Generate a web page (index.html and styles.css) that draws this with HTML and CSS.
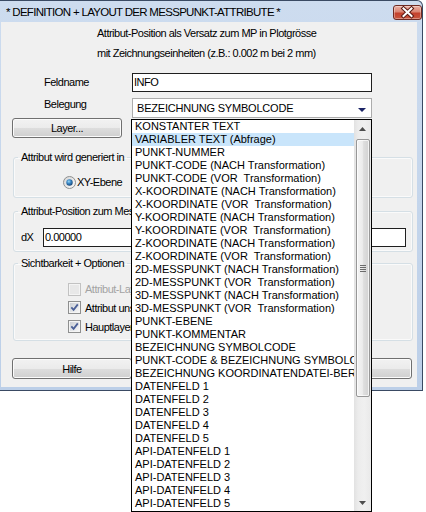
FILE: index.html
```html
<!DOCTYPE html>
<html lang="de">
<head>
<meta charset="utf-8">
<title>Definition + Layout der Messpunkt-Attribute</title>
<link rel="stylesheet" href="styles.css">
</head>
<body>
<div class="window">
  <div class="titlebar">
    <span class="title">* DEFINITION + LAYOUT DER MESSPUNKT-ATTRIBUTE *</span>
    <span class="close">
      <svg width="29" height="15" viewBox="0 0 29 15">
        <path d="M10.5 3.5 L18.5 11 M18.5 3.5 L10.5 11" stroke="#5a1a14" stroke-width="4" stroke-linecap="square"/>
        <path d="M10.5 3.5 L18.5 11 M18.5 3.5 L10.5 11" stroke="#ffffff" stroke-width="2" stroke-linecap="square"/>
      </svg>
    </span>
  </div>
  <div class="client">
    <div class="intro">
      <p>Attribut-Position als Versatz zum MP in Plotgrösse</p>
      <p>mit Zeichnungseinheiten (z.B.: 0.002 m bei 2 mm)</p>
    </div>
    <div class="row row-name">
      <span class="lbl">Feldname</span>
      <div class="edit edit-name">INFO</div>
    </div>
    <div class="row row-combo">
      <span class="lbl">Belegung</span>
      <div class="combo">
        <span class="combo-text">BEZEICHNUNG SYMBOLCODE</span>
        <svg class="combo-arrow" width="8" height="4" viewBox="0 0 8 4"><path d="M0 0 H8 L4 4 Z" fill="#1b2466"/></svg>
      </div>
    </div>
    <div class="row row-layer">
      <button class="btn btn-layer">Layer...</button>
    </div>

    <fieldset class="group g1">
      <legend>Attribut wird generiert in</legend>
      <div class="g1-in">
        <div class="radio-row">
          <svg class="radio" width="13" height="13" viewBox="0 0 13 13">
            <defs>
              <radialGradient id="dot" cx="0.4" cy="0.35" r="0.7">
                <stop offset="0" stop-color="#9ad8f6"/>
                <stop offset="0.45" stop-color="#3a86c4"/>
                <stop offset="1" stop-color="#153f6e"/>
              </radialGradient>
              <linearGradient id="ring" x1="0" y1="0" x2="1" y2="1">
                <stop offset="0" stop-color="#d4d4d4"/>
                <stop offset="1" stop-color="#fbfbfb"/>
              </linearGradient>
            </defs>
            <circle cx="6.5" cy="6.5" r="6" fill="url(#ring)" stroke="#8e8f8f"/>
            <circle cx="6.5" cy="6.5" r="3.2" fill="url(#dot)"/>
          </svg>
          <span class="radio-text">XY-Ebene</span>
        </div>
      </div>
    </fieldset>

    <fieldset class="group g2">
      <legend>Attribut-Position zum Messpunkt</legend>
      <div class="g2-in">
        <span class="dlbl">dX</span>
        <div class="edit edit-dx">0.00000</div>
      </div>
    </fieldset>

    <fieldset class="group g3">
      <legend>Sichtbarkeit + Optionen</legend>
      <div class="g3-in">
        <div class="chk-row r1 disabled">
          <svg class="chk" width="13" height="13" viewBox="0 0 13 13"><rect x="0.5" y="0.5" width="12" height="12" fill="#f4f4f4" stroke="#c2c2c2"/><rect x="2" y="2" width="9" height="9" fill="#e8e8e8"/></svg>
          <span>Attribut-Layer</span>
        </div>
        <div class="chk-row r2">
          <svg class="chk" width="13" height="13" viewBox="0 0 13 13"><defs><linearGradient id="cb" x1="0" y1="0" x2="1" y2="1"><stop offset="0" stop-color="#cbcfd5"/><stop offset="1" stop-color="#f6f6f6"/></linearGradient></defs><rect x="0.5" y="0.5" width="12" height="12" fill="#f4f4f4" stroke="#8e8f8f"/><rect x="2" y="2" width="9" height="9" fill="url(#cb)"/><path d="M3.3 6.3 L5.6 8.8 L9.8 3.4" stroke="#4a5f97" stroke-width="1.8" fill="none"/></svg>
          <span>Attribut unsichtbar</span>
        </div>
        <div class="chk-row r3">
          <svg class="chk" width="13" height="13" viewBox="0 0 13 13"><rect x="0.5" y="0.5" width="12" height="12" fill="#f4f4f4" stroke="#8e8f8f"/><rect x="2" y="2" width="9" height="9" fill="url(#cb)"/><path d="M3.3 6.3 L5.6 8.8 L9.8 3.4" stroke="#4a5f97" stroke-width="1.8" fill="none"/></svg>
          <span>Hauptlayer verwenden</span>
        </div>
      </div>
    </fieldset>

    <div class="buttons">
      <button class="btn btn-foot">Hilfe</button>
      <button class="btn btn-foot">Abbrechen</button>
      <button class="btn btn-foot">OK</button>
    </div>
  </div>
</div>

<div class="droplist">
  <ul class="items">
    <li>KONSTANTER TEXT</li>
    <li class="sel">VARIABLER TEXT (Abfrage)</li>
    <li>PUNKT-NUMMER</li>
    <li>PUNKT-CODE (NACH Transformation)</li>
    <li>PUNKT-CODE (VOR  Transformation)</li>
    <li>X-KOORDINATE (NACH Transformation)</li>
    <li>X-KOORDINATE (VOR  Transformation)</li>
    <li>Y-KOORDINATE (NACH Transformation)</li>
    <li>Y-KOORDINATE (VOR  Transformation)</li>
    <li>Z-KOORDINATE (NACH Transformation)</li>
    <li>Z-KOORDINATE (VOR  Transformation)</li>
    <li>2D-MESSPUNKT (NACH Transformation)</li>
    <li>2D-MESSPUNKT (VOR  Transformation)</li>
    <li>3D-MESSPUNKT (NACH Transformation)</li>
    <li>3D-MESSPUNKT (VOR  Transformation)</li>
    <li>PUNKT-EBENE</li>
    <li>PUNKT-KOMMENTAR</li>
    <li>BEZEICHNUNG SYMBOLCODE</li>
    <li>PUNKT-CODE &amp; BEZEICHNUNG SYMBOLCODE</li>
    <li>BEZEICHNUNG KOORDINATENDATEI-BEREICH</li>
    <li>DATENFELD 1</li>
    <li>DATENFELD 2</li>
    <li>DATENFELD 3</li>
    <li>DATENFELD 4</li>
    <li>DATENFELD 5</li>
    <li>API-DATENFELD 1</li>
    <li>API-DATENFELD 2</li>
    <li>API-DATENFELD 3</li>
    <li>API-DATENFELD 4</li>
    <li>API-DATENFELD 5</li>
  </ul>
  <div class="vscroll">
    <div class="sb-btn">
      <svg width="7" height="4" viewBox="0 0 7 4"><path d="M3.5 0 L7 4 H0 Z" fill="#4d4d4d"/></svg>
    </div>
    <div class="thumb">
      <svg width="6" height="7" viewBox="0 0 6 7"><path d="M0 0.5 H6 M0 2.5 H6 M0 4.5 H6 M0 6.5 H6" stroke="#6b6b6b" stroke-width="1"/></svg>
    </div>
    <div class="sb-track"></div>
    <div class="sb-btn">
      <svg width="7" height="4" viewBox="0 0 7 4"><path d="M0 0 H7 L3.5 4 Z" fill="#4d4d4d"/></svg>
    </div>
  </div>
</div>
</body>
</html>
```
FILE: styles.css
```css
* { box-sizing: border-box; }

body {
  margin: 0;
  width: 426px;
  height: 512px;
  overflow: hidden;
  position: relative;
  background: #ffffff;
  font-family: "Liberation Sans", Arial, sans-serif;
  font-size: 11px;
  letter-spacing: -0.5px;
  color: #000;
}

p { margin: 0; }

/* ---------- window frame ---------- */
.window {
  width: 423px;
  height: 391px;
  border: 1px solid #3a4a63;
  border-left: none;
  border-radius: 0 6px 0 0;
  background: linear-gradient(#cddcef, #bccfe8);
  display: flex;
  flex-direction: column;
}

.titlebar {
  height: 21px;
  display: flex;
  align-items: flex-start;
  flex: none;
}

.title {
  margin: 4px 0 0 6px;
  font-size: 11.5px;
  letter-spacing: -0.7px;
  line-height: 15px;
  white-space: nowrap;
}

.close {
  margin: 4px 0 0 auto;
  width: 29px;
  height: 15px;
  border: 1px solid #6e2a22;
  border-radius: 3px;
  background: linear-gradient(#ebb0a4 0%, #d98573 45%, #c4412d 55%, #c8563f 100%);
  box-shadow: inset 0 0 0 1px rgba(255,255,255,0.35);
  display: flex;
  align-items: center;
  justify-content: center;
  overflow: hidden;
}
.close svg { display: block; margin: -1px; }

.client {
  flex: 1;
  margin: 0 5px 3px 1px;
  background: #f0f0f0;
}

/* ---------- top area ---------- */
.intro {
  padding: 1px 0 0 96px;
  line-height: 20px;
}

.row {
  display: flex;
}

.lbl {
  flex: 0 0 131px;
  padding-left: 43px;
  line-height: 13px;
}

.row-name {
  margin-top: 10px;
  height: 19px;
  align-items: center;
}

.edit {
  background: #fff;
  border: 1px solid #1f1f1f;
  height: 19px;
  line-height: 17px;
  padding-left: 1px;
  white-space: nowrap;
}

.edit-name { width: 240px; }

.row-combo {
  margin-top: 6px;
  height: 20px;
  align-items: flex-start;
}

.combo {
  width: 240px;
  height: 20px;
  border: 1px solid #acacac;
  background: #fff;
  display: flex;
  align-items: flex-start;
}

.combo-text {
  padding-left: 4px;
  line-height: 18px;
  letter-spacing: -0.2px;
  white-space: nowrap;
}

.combo-arrow {
  display: block;
  margin: 9px 5px 0 auto;
}

.row-layer { height: 20px; }

.btn {
  font-family: "Liberation Sans", Arial, sans-serif;
  font-size: 11px;
  letter-spacing: -0.5px;
  color: #000;
  padding: 0;
  border: 1px solid #707070;
  border-radius: 3px;
  background: linear-gradient(#f2f2f2 0%, #ebebeb 50%, #dddddd 51%, #cfcfcf 100%);
  box-shadow: inset 0 0 0 1px #fbfbfb;
}

.btn-layer {
  margin-left: 11px;
  width: 110px;
  height: 20px;
}

/* ---------- group boxes ---------- */
.group {
  margin: 0 4px 0 12px;
  width: 400px;
  padding: 0;
  border: 1px solid #d5dfe5;
  border-radius: 3px;
  box-shadow: inset 0 0 0 1px #fafafa;
  min-width: 0;
}

.group legend {
  margin-left: 4px;
  padding: 0 3px;
  line-height: 13px;
  white-space: nowrap;
}

.g1 { margin-top: 13px; }
.g1-in {
  height: 33px;
  padding-top: 12px;
}
.radio-row {
  margin-left: 49px;
  height: 13px;
  display: flex;
  align-items: center;
  line-height: 13px;
}
.radio { display: block; flex: none; }
.radio-text { margin-left: 1px; }

.g2 { margin-top: 7px; }
.g2-in {
  height: 33px;
  padding: 10px 0 0 7px;
  display: flex;
  align-items: flex-start;
}
.dlbl {
  flex: 0 0 22px;
  line-height: 19px;
}
.edit-dx { width: 363px; }

.g3 { margin-top: 5px; }
.g3-in {
  height: 70px;
  padding: 10px 0 0 54px;
}
.chk-row {
  display: flex;
  align-items: center;
  gap: 4px;
  white-space: nowrap;
}
.chk-row.r1 { height: 18px; }
.chk-row.r2, .chk-row.r3 { height: 19px; }
.chk { display: block; flex: none; }
.chk-row.disabled { color: #a3a3a3; }

/* ---------- bottom buttons ---------- */
.buttons {
  margin-top: 17px;
  padding: 0 5px 0 11px;
  display: flex;
  justify-content: space-between;
}
.btn-foot {
  width: 120px;
  height: 21px;
}

/* ---------- open drop-down list (overlay) ---------- */
.droplist {
  position: absolute;
  left: 131px;
  top: 119px;
  width: 241px;
  height: 393px;
  border: 1px solid #000;
  background: #fff;
  display: flex;
  letter-spacing: 0;
}

.items {
  list-style: none;
  margin: 0;
  padding: 0;
  width: 222px;
  flex: none;
  overflow: hidden;
  font-size: 11px;
}

.items li {
  height: 13px;
  line-height: 13px;
  padding-left: 3px;
  white-space: pre;
  overflow: hidden;
}

.items li.sel { background: #c9e5fb; }

.vscroll {
  width: 17px;
  flex: none;
  display: flex;
  flex-direction: column;
  background: linear-gradient(to right, #e2e2e2 0%, #ececec 25%, #f0f0f0 60%, #e9e9e9 100%);
}

.sb-btn {
  height: 17px;
  flex: none;
  display: flex;
  align-items: center;
  justify-content: center;
}
.sb-btn svg { display: block; }

.thumb {
  margin: 2px 1px 0 2px;
  height: 258px;
  flex: none;
  border: 1px solid #979797;
  border-radius: 2px;
  background: linear-gradient(to right, #f4f4f4 0%, #ececec 45%, #dedede 55%, #d2d2d2 100%);
  box-shadow: inset 0 0 0 1px rgba(255,255,255,0.7);
  display: flex;
  align-items: center;
  justify-content: center;
}
.thumb svg { display: block; }

.sb-track { flex: 1; }
```
